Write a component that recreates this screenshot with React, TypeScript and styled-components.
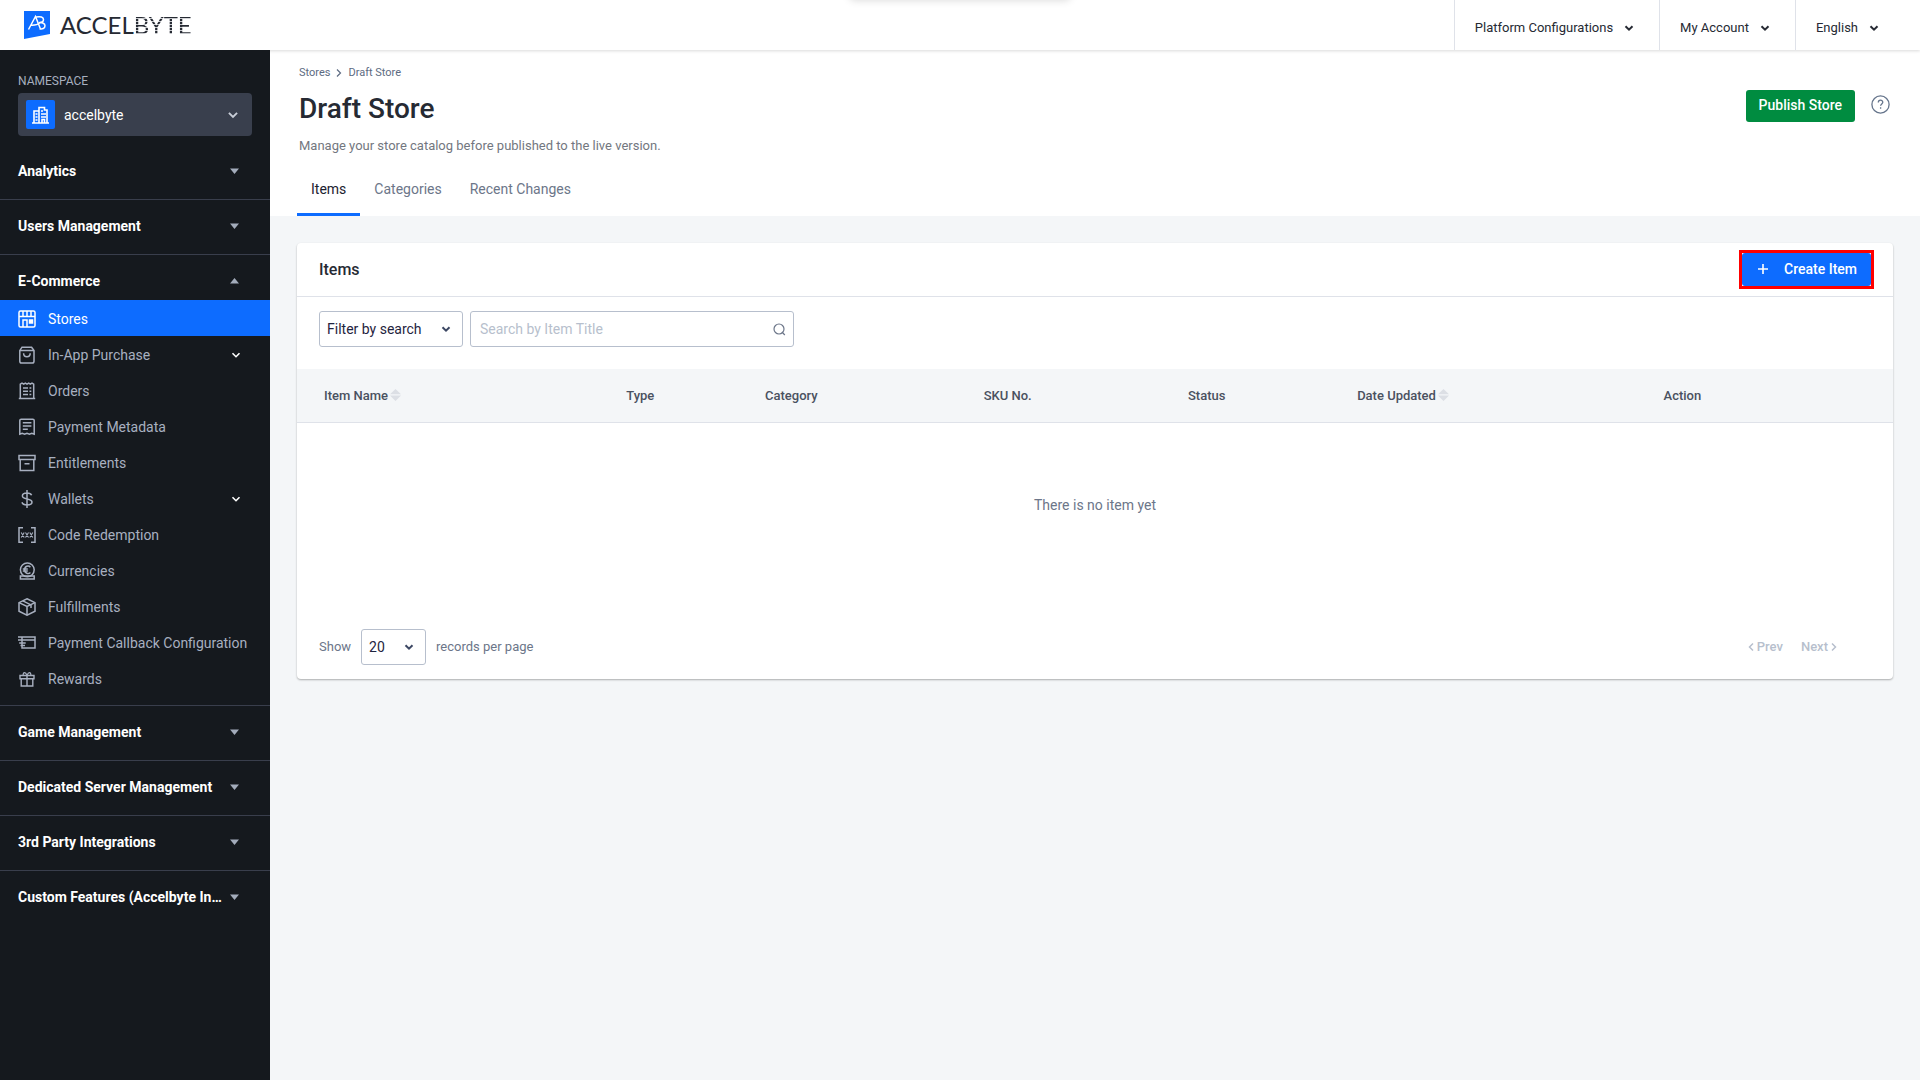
import React from "react";
import styled, { createGlobalStyle, css } from "styled-components";

const color = {
  blue: "#0d6cff",
  green: "#008c40",
  dark: "#15191e",
  ink: "#262a33",
  muted: "#6c7689",
  pale: "#b7bfcd",
  line: "#dfe2e9",
  page: "#f4f6f8",
};

const GlobalStyle = createGlobalStyle`
  *, *::before, *::after { box-sizing: border-box; }
  body {
    margin: 0;
    background: ${color.page};
    color: ${color.ink};
    font-family: Roboto, "Liberation Sans", sans-serif;
    font-size: 14px;
    line-height: 20px;
  }
  button, input, select { font: inherit; color: inherit; }
  button { cursor: pointer; }
  a { color: inherit; text-decoration: none; }
  h1, h2, p, ul { margin: 0; padding: 0; }
  ul { list-style: none; }
  svg { display: block; flex: none; }
`;

/* ---------- layout ---------- */

const Shell = styled.div`
  display: flex;
  flex-direction: column;
  min-height: 100vh;
`;

const TopBar = styled.header`
  position: relative;
  z-index: 1;
  display: flex;
  justify-content: space-between;
  height: 50px;
  padding-left: 24px;
  background: #fff;
  box-shadow: 0 1px 3px rgba(0, 0, 0, 0.15);
`;

const HiddenToast = styled.div`
  position: absolute;
  top: -20px;
  left: 50%;
  width: 220px;
  height: 20px;
  margin-left: -110px;
  border-radius: 4px;
  background: #fff;
  box-shadow: 0 0 8px rgba(0, 0, 0, 0.16);
`;

const Body = styled.div`
  display: flex;
  flex: 1;
`;

const Sidebar = styled.aside`
  position: relative;
  z-index: 2;
  flex: none;
  width: 270px;
  padding-top: 22px;
  background: ${color.dark};
`;

const Main = styled.main`
  flex: 1;
  min-width: 0;
`;

/* ---------- top bar ---------- */

const Brand = styled.a`
  display: flex;
  align-items: center;
  gap: 10px;
`;

const Wordmark = styled.span`
  color: ${color.ink};
  font-family: Lato, "Liberation Sans", sans-serif;
  font-size: 24px;
  line-height: 30px;
`;

const Striped = styled.span`
  color: transparent;
  background: repeating-linear-gradient(${color.ink} 0 2px, #c4c6ca 2px 3px);
  background-clip: text;
`;

const TopMenu = styled.nav`
  display: flex;
`;

const TopItem = styled.button<{ $end?: number }>`
  display: flex;
  align-items: center;
  gap: 10px;
  padding: 6px ${(p) => p.$end ?? 24}px 0 20px;
  border: 0;
  border-left: 1px solid ${color.line};
  background: none;
  font-size: 13px;
`;

/* ---------- sidebar ---------- */

const NamespaceLabel = styled.div`
  padding-left: 18px;
  color: #a7afbe;
  font-size: 12px;
  line-height: 18px;
`;

const Namespace = styled.button`
  display: flex;
  align-items: center;
  gap: 9px;
  width: 234px;
  height: 43px;
  margin: 3px 18px 9px;
  padding: 0 12px 0 8px;
  border: 0;
  border-radius: 4px;
  background: #393f4d;
  color: #fff;
  text-align: left;
`;

const NamespaceIcon = styled.span`
  display: grid;
  place-items: center;
  width: 29px;
  height: 29px;
  border-radius: 2px;
  background: ${color.blue};
`;

const Grow = styled.span`
  flex: 1;
  min-width: 0;
  white-space: nowrap;
`;

const Section = styled.section`
  & + & {
    border-top: 1px solid #393e4c;
  }
`;

const SectionHead = styled.button<{ $open?: boolean }>`
  display: flex;
  align-items: center;
  gap: 4px;
  width: 100%;
  height: ${(p) => (p.$open ? 45 : 54)}px;
  padding: ${(p) => (p.$open ? "7px 31px 0 18px" : "0 31px 2px 18px")};
  border: 0;
  background: none;
  color: #fff;
  font-weight: 700;
  text-align: left;
`;

const NavList = styled.ul`
  padding-bottom: 9px;
`;

const NavLink = styled.a<{ $active?: boolean }>`
  display: flex;
  align-items: center;
  gap: 12px;
  height: 36px;
  padding: 2px 28px 0 18px;
  color: #a8b0c0;
  white-space: nowrap;
  ${(p) =>
    p.$active &&
    css`
      background: ${color.blue};
      color: #fff;
    `}
`;

/* ---------- page head ---------- */

const PageHead = styled.div`
  padding: 14px 27px 0;
  background: #fff;
`;

const Crumbs = styled.nav`
  display: flex;
  align-items: center;
  gap: 6px;
  padding-left: 2px;
  color: #5d6b82;
  font-size: 11px;
  line-height: 18px;
`;

const TitleRow = styled.div`
  display: flex;
  align-items: flex-start;
  justify-content: space-between;
  padding: 8px 3px 0 2px;
`;

const Title = styled.h1`
  padding: 2px 0;
  font-size: 28px;
  font-weight: 500;
  line-height: 34px;
`;

const HeadActions = styled.div`
  display: flex;
  align-items: flex-start;
  gap: 16px;
`;

const PublishButton = styled.button`
  height: 32px;
  padding: 0 13px 2px;
  border: 0;
  border-radius: 3px;
  background: ${color.green};
  color: #fff;
  font-weight: 500;
`;

const IconButton = styled.button`
  padding: 5px 0 0;
  border: 0;
  background: none;
`;

const Summary = styled.p`
  padding: 8px 2px 0;
  color: #737780;
  font-size: 13px;
`;

const Tabs = styled.nav`
  display: flex;
  margin-top: 9px;
`;

const Tab = styled.a<{ $active?: boolean }>`
  height: 51px;
  padding: 14px 14px 0;
  border-bottom: 3px solid ${(p) => (p.$active ? color.blue : "transparent")};
  color: ${(p) => (p.$active ? "#1c2230" : color.muted)};
`;

/* ---------- card ---------- */

const Card = styled.section`
  margin: 27px;
  border-radius: 4px;
  background: #fff;
  box-shadow: 0 1px 2px rgba(0, 0, 0, 0.3);
`;

const CardHead = styled.div`
  display: flex;
  align-items: center;
  justify-content: space-between;
  height: 54px;
  padding: 0 19px 0 22px;
  border-bottom: 1px solid ${color.line};
`;

const CardTitle = styled.h2`
  font-size: 16px;
  font-weight: 500;
`;

const Highlight = styled.div`
  border: 3px solid #f00;
`;

const CreateButton = styled.button`
  display: flex;
  align-items: center;
  gap: 16px;
  height: 33px;
  padding: 0 14px 2px 16px;
  border: 0;
  border-radius: 3px;
  background: ${color.blue};
  color: #fff;
  font-weight: 500;
`;

const Filters = styled.form`
  display: flex;
  gap: 7px;
  padding: 14px 22px 22px;
`;

const SelectBox = styled.div<{ $width: number }>`
  display: grid;
  align-items: center;
  width: ${(p) => p.$width}px;
  height: 36px;

  select,
  svg {
    grid-area: 1 / 1;
  }
  select {
    width: 100%;
    height: 36px;
    padding: 0 24px 0 7px;
    border: 1px solid ${color.pale};
    border-radius: 3px;
    appearance: none;
    background: #fff;
    color: #1f2440;
  }
  svg {
    justify-self: end;
    margin-right: 11px;
    pointer-events: none;
  }
`;

const SearchBox = styled.div`
  display: flex;
  align-items: center;
  width: 324px;
  height: 36px;
  padding: 0 7px 0 9px;
  border: 1px solid ${color.pale};
  border-radius: 3px;

  input {
    flex: 1;
    min-width: 0;
    padding: 0;
    border: 0;
    outline: 0;
    background: none;
  }
  input::placeholder {
    color: ${color.pale};
  }
`;

const Table = styled.table`
  width: 100%;
  border-collapse: collapse;
  table-layout: fixed;

  th {
    height: 54px;
    padding: 0 10px;
    background: ${color.page};
    box-shadow: inset 0 -1px 0 ${color.line};
    color: #4a5160;
    font-size: 13px;
    font-weight: 500;
    text-align: left;
  }
  th:first-child {
    padding-left: 27px;
  }
  td {
    height: 164px;
    padding: 0;
    color: ${color.muted};
    text-align: center;
  }
`;

const SortLabel = styled.span`
  display: flex;
  align-items: center;
  gap: 2px;
`;

const Pager = styled.div`
  display: flex;
  align-items: center;
  justify-content: space-between;
  padding: 42px 56px 14px 22px;
  color: ${color.muted};
  font-size: 13px;

  select {
    font-size: 14px;
  }
`;

const PagerGroup = styled.div<{ $gap: number }>`
  display: flex;
  align-items: center;
  gap: ${(p) => p.$gap}px;
`;

const PageButton = styled.button`
  display: flex;
  align-items: center;
  gap: 3px;
  padding: 0;
  border: 0;
  background: none;
  color: ${color.pale};
  font-weight: 500;
`;

/* ---------- icons ---------- */

type ChevronProps = { size?: number; stroke?: string; weight?: number };

const Chevron = ({ size = 12, stroke = "currentColor", weight = 2 }: ChevronProps) => (
  <svg width={size} height={size} viewBox="0 0 12 12" fill="none" stroke={stroke} strokeWidth={weight} aria-hidden>
    <path d="M2.5 4.2 6 7.7l3.5-3.5" />
  </svg>
);

const Side = ({ left, weight = 1.5 }: { left?: boolean; weight?: number }) => (
  <svg width="6" height="10" viewBox="0 0 6 10" fill="none" stroke="currentColor" strokeWidth={weight} aria-hidden>
    <path d={left ? "M5 1.5 1.5 5 5 8.5" : "M1 1.5 4.5 5 1 8.5"} />
  </svg>
);

const Caret = ({ up }: { up?: boolean }) => (
  <svg width="9" height="6" viewBox="0 0 9 6" fill="#a3acbb" aria-hidden>
    <path d={up ? "M0 5.5 4.5 0 9 5.5z" : "M0 .5h9L4.5 6z"} />
  </svg>
);

const Sorter = () => (
  <svg width="11" height="14" viewBox="0 0 11 14" fill="#dcdfe5" aria-hidden>
    <path d="M0 5.2 5.5 0 11 5.2zM0 6.6h11L5.5 12z" />
  </svg>
);

const icons = {
  stores: (
    <>
      <rect x="1" y="1" width="16" height="16" rx="1.5" />
      <path d="M1 6.5h16M5 1v5.5M9 1v5.5M13 1v5.5M5 17v-7h4v7" />
      <path d="M11.5 10h3v3h-3z" fill="currentColor" />
    </>
  ),
  bag: (
    <>
      <path d="M1.8 4.6 4 1.2h9.6l2.4 3.4v10.6a1.8 1.8 0 0 1-1.8 1.8H3.6a1.8 1.8 0 0 1-1.8-1.8z" />
      <path d="M1.8 4.6H16M5.6 7.2c0 4.6 6.6 4.6 6.6 0" />
    </>
  ),
  orders: (
    <>
      <path d="M2.3 16.5V2.2l1.7-1 1.7 1 1.6-1 1.7 1 1.7-1 1.6 1 1.7-1 1.7 1v14.3M.8 16.6h16.4" />
      <path d="M5 6h5M5 9.2h5M5 12.4h5M11.5 6h1.8M11.5 9.2h1.8M11.5 12.4h1.8" />
    </>
  ),
  metadata: (
    <>
      <path d="M1.8 16.2V2.6c0-.8.6-1.4 1.4-1.4h11.6c.8 0 1.4.6 1.4 1.4v13.6l-2.4-1-2.4 1-2.4-1-2.4 1-2.4-1z" />
      <path d="M4.8 4.8h8.6M4.8 8h8.6M4.8 11.2h5" />
    </>
  ),
  archive: <path d="M1 1.4h16v4H1zM2.2 5.4v11.2h13.6V5.4M6.5 9.8h5" />,
  dollar: (
    <path d="M9 0v18M13.6 5.2C13 3.6 11.4 3 9 3 6.2 3 4.4 4.1 4.4 5.9 4.4 10 14 7.8 14 12c0 2-2 3-5 3-2.6 0-4.5-.9-5-2.7" />
  ),
  code: (
    <>
      <path d="M5 1.8H1v14.4h4M13 1.8h4v14.4h-4" />
      <path
        d="m3.2 6.5 3 5M6.2 6.5l-3 5M7.5 6.5l3 5M10.5 6.5l-3 5M11.800 6.5l3 5M14.800 6.5l-3 5"
        strokeWidth="1.1"
      />
    </>
  ),
  currency: (
    <>
      <circle cx="9.3" cy="7.8" r="6.9" />
      <path d="M12.4 5.2c-1.8-2-5.8-1.3-5.8 2.6s4 4.6 5.8 2.6M4.8 7h5M4.8 9h5M2.4 14h13.8v3H2.4z" />
    </>
  ),
  box: (
    <>
      <path d="M9 .8 17 4.6v8.6l-8 4-8-4V4.6z" />
      <path d="M1 4.6l8 3.8 8-3.8M9 8.4v8.8M4.8 2.9l8.2 4v3" />
    </>
  ),
  callback: <path d="M0 3h17v11H4v-3M0 6h17M1.2 9h6.5M4 3v9M2.5 11.5H7" />,
  gift: (
    <>
      <path d="M2 5.5h14v3.3H2zM3.2 8.8V16h11.6V8.8M9 5.5V16" strokeWidth="1.4" />
      <path d="M9 5.5C7.5 1.5 4.8 2 5.2 5.5M9 5.5c1.5-4 4.2-3.5 3.8 0" strokeWidth="1.2" />
    </>
  ),
};

type IconName = keyof typeof icons;

const NavIcon = ({ name }: { name: IconName }) => (
  <svg width="18" height="18" viewBox="0 0 18 18" fill="none" stroke="currentColor" strokeWidth="1.5" aria-hidden>
    {icons[name]}
  </svg>
);

const Building = () => (
  <svg width="17" height="18" viewBox="0 0 17 18" fill="none" stroke="#fff" strokeWidth="1.6" aria-hidden>
    <path d="M0 17h17M2 17V5h5M7 17V1.5h5.5V4H15v13M10 17v-3.5h2.5V17" />
    <path d="M3.5 8h2M3.5 11h2M3.5 14h2M9 5h2M9 8h5M9 11h5" />
  </svg>
);

const LogoMark = () => (
  <svg width="26" height="28" viewBox="0 0 26 28" fill="none" aria-hidden>
    <path d="M0 0h26v23L0 28z" fill={color.blue} />
    <path
      d="M4.5 18.5 11.5 5.5l5 12.5M7 14.2c4 .2 7-.7 9.5-2.7M12 6c4.5-.9 7.5 0 7.5 2.5s-2.5 3.2-4.5 3.2c3.5-.4 6 .8 6 3 0 2.8-2.8 3.6-5.5 3"
      stroke="#fff"
      strokeWidth="1.5"
    />
  </svg>
);

const Help = () => (
  <svg width="19" height="19" viewBox="0 0 19 19" fill="none" stroke="#65748b" strokeWidth="1.3" aria-hidden>
    <circle cx="9.5" cy="9.5" r="8.6" />
    <path d="M7.3 7.4c0-3 4.5-3 4.5-.2 0 1.7-2.2 1.7-2.2 3.6M9.6 12.2v1.5" />
  </svg>
);

const Magnifier = () => (
  <svg width="13" height="13" viewBox="0 0 13 13" fill="none" stroke="#6c7689" strokeWidth="1.2" aria-hidden>
    <circle cx="6" cy="6" r="5" />
    <path d="m9 9 2.8 3" />
  </svg>
);

const Plus = () => (
  <svg width="10" height="10" viewBox="0 0 10 10" stroke="#fff" strokeWidth="1.6" aria-hidden>
    <path d="M5 0v10M0 5h10" />
  </svg>
);

/* ---------- data ---------- */

const commerce: { label: string; icon: IconName; active?: boolean; nested?: boolean }[] = [
  { label: "Stores", icon: "stores", active: true },
  { label: "In-App Purchase", icon: "bag", nested: true },
  { label: "Orders", icon: "orders" },
  { label: "Payment Metadata", icon: "metadata" },
  { label: "Entitlements", icon: "archive" },
  { label: "Wallets", icon: "dollar", nested: true },
  { label: "Code Redemption", icon: "code" },
  { label: "Currencies", icon: "currency" },
  { label: "Fulfillments", icon: "box" },
  { label: "Payment Callback Configuration", icon: "callback" },
  { label: "Rewards", icon: "gift" },
];

const sections = [
  { title: "Analytics" },
  { title: "Users Management" },
  { title: "E-Commerce", items: commerce },
  { title: "Game Management" },
  { title: "Dedicated Server Management" },
  { title: "3rd Party Integrations" },
  { title: "Custom Features (Accelbyte In…" },
];

const columns = [
  { label: "Item Name", width: "20%", sortable: true },
  { label: "Type", width: "8.7%" },
  { label: "Category", width: "13.7%" },
  { label: "SKU No.", width: "12.8%" },
  { label: "Status", width: "10.6%" },
  { label: "Date Updated", width: "19.2%", sortable: true },
  { label: "Action", width: "15%" },
];

/* ---------- page ---------- */

export default function App() {
  return (
    <Shell>
      <GlobalStyle />
      <TopBar>
        <HiddenToast />
        <Brand href="#" aria-label="AccelByte home">
          <LogoMark />
          <Wordmark>
            ACCEL<Striped>BYTE</Striped>
          </Wordmark>
        </Brand>
        <TopMenu>
          <TopItem>
            Platform Configurations <Chevron />
          </TopItem>
          <TopItem>
            My Account <Chevron />
          </TopItem>
          <TopItem $end={40}>
            English <Chevron />
          </TopItem>
        </TopMenu>
      </TopBar>

      <Body>
        <Sidebar>
          <NamespaceLabel>NAMESPACE</NamespaceLabel>
          <Namespace>
            <NamespaceIcon>
              <Building />
            </NamespaceIcon>
            <Grow>accelbyte</Grow>
            <Chevron size={14} stroke="#c9ced8" weight={1.6} />
          </Namespace>
          {sections.map(({ title, items }) => (
            <Section key={title}>
              <SectionHead $open={!!items} aria-expanded={!!items}>
                <Grow>{title}</Grow>
                <Caret up={!!items} />
              </SectionHead>
              {items && (
                <NavList>
                  {items.map((item) => (
                    <li key={item.label}>
                      <NavLink href="#" $active={item.active}>
                        <NavIcon name={item.icon} />
                        {item.nested ? <Grow>{item.label}</Grow> : item.label}
                        {item.nested && <Chevron stroke="#fff" weight={1.6} />}
                      </NavLink>
                    </li>
                  ))}
                </NavList>
              )}
            </Section>
          ))}
        </Sidebar>

        <Main>
          <PageHead>
            <Crumbs aria-label="Breadcrumb">
              <a href="#">Stores</a>
              <Side weight={1.2} />
              <a href="#">Draft Store</a>
            </Crumbs>
            <TitleRow>
              <Title>Draft Store</Title>
              <HeadActions>
                <PublishButton>Publish Store</PublishButton>
                <IconButton aria-label="Help">
                  <Help />
                </IconButton>
              </HeadActions>
            </TitleRow>
            <Summary>Manage your store catalog before published to the live version.</Summary>
            <Tabs>
              <Tab href="#" $active>
                Items
              </Tab>
              <Tab href="#">Categories</Tab>
              <Tab href="#">Recent Changes</Tab>
            </Tabs>
          </PageHead>

          <Card>
            <CardHead>
              <CardTitle>Items</CardTitle>
              <Highlight>
                <CreateButton>
                  <Plus />
                  Create Item
                </CreateButton>
              </Highlight>
            </CardHead>
            <Filters>
              <SelectBox $width={144}>
                <select aria-label="Filter">
                  <option>Filter by search</option>
                </select>
                <Chevron stroke="#3c4763" />
              </SelectBox>
              <SearchBox>
                <input type="text" aria-label="Search by Item Title" placeholder="Search by Item Title" />
                <Magnifier />
              </SearchBox>
            </Filters>
            <Table>
              <colgroup>
                {columns.map((c) => (
                  <col key={c.label} width={c.width} />
                ))}
              </colgroup>
              <thead>
                <tr>
                  {columns.map((c) => (
                    <th key={c.label} scope="col">
                      <SortLabel>
                        {c.label}
                        {c.sortable && <Sorter />}
                      </SortLabel>
                    </th>
                  ))}
                </tr>
              </thead>
              <tbody>
                <tr>
                  <td colSpan={columns.length}>There is no item yet</td>
                </tr>
              </tbody>
            </Table>
            <Pager>
              <PagerGroup $gap={10}>
                <label htmlFor="page-size">Show</label>
                <SelectBox $width={65}>
                  <select id="page-size">
                    <option>20</option>
                  </select>
                  <Chevron stroke="#3c4763" />
                </SelectBox>
                <span>records per page</span>
              </PagerGroup>
              <PagerGroup $gap={18}>
                <PageButton disabled>
                  <Side left />
                  Prev
                </PageButton>
                <PageButton disabled>
                  Next
                  <Side />
                </PageButton>
              </PagerGroup>
            </Pager>
          </Card>
        </Main>
      </Body>
    </Shell>
  );
}
